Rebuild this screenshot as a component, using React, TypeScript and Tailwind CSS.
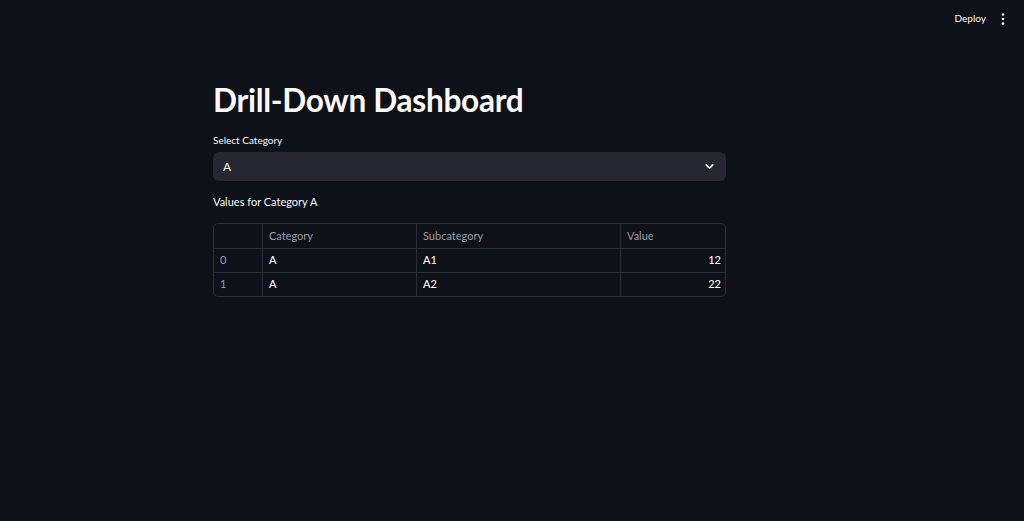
import { ChevronDown } from "lucide-react";

const rows = [
  { idx: 0, category: "A", sub: "A1", value: 12 },
  { idx: 1, category: "A", sub: "A2", value: 22 },
];

export default function App() {
  return (
    <div
      className="min-h-[521px] w-full bg-[#0e1117] text-[#fafafa]"
      style={{ fontFamily: "Lato, 'Liberation Sans', sans-serif" }}
    >
      <header className="flex h-[37px] items-center justify-end pr-[19px]">
        <button className="text-[10px] text-[#fafafa] mr-[15px]">Deploy</button>
        <svg width="4" height="12" viewBox="0 0 4 12" className="fill-[#fafafa]">
          <circle cx="2" cy="1.5" r="1.3" />
          <circle cx="2" cy="6" r="1.3" />
          <circle cx="2" cy="10.5" r="1.3" />
        </svg>
      </header>

      <main className="pl-[213px] pt-[44px]">
        <div className="w-[513px]">
          <h1 className="text-[31.6px] font-bold leading-[38px] tracking-[-0.3px]">Drill-Down Dashboard</h1>

          <label className="mt-[14px] block text-[10px] leading-[14px]">Select Category</label>
          <div className="mt-[5px] flex h-[29px] items-center justify-between rounded-[6px] bg-[#262730] pl-[10px] pr-[10px]">
            <span className="text-[12px]">A</span>
            <ChevronDown className="h-[13px] w-[13px]" strokeWidth={3} />
          </div>

          <p className="mt-[13px] text-[11px] leading-[16px]">Values for Category A</p>

          <div className="mt-[13px] overflow-hidden rounded-[5px] border border-[#2a2d35] text-[11px]">
            <div className="grid grid-cols-[49px_154px_204px_1fr] h-[24px] text-[#9b9ca3]">
              <div className="border-r border-[#2a2d35]" />
              <div className="flex items-center border-r border-[#2a2d35] px-[6px]">Category</div>
              <div className="flex items-center border-r border-[#2a2d35] px-[6px]">Subcategory</div>
              <div className="flex items-center px-[6px]">Value</div>
            </div>
            {rows.map((r) => (
              <div key={r.idx} className="grid grid-cols-[49px_154px_204px_1fr] h-[24px] border-t border-[#2a2d35]">
                <div className="flex items-center border-r border-[#2a2d35] px-[6px] text-[#9b9ca3]">{r.idx}</div>
                <div className="flex items-center border-r border-[#2a2d35] px-[6px] font-medium">{r.category}</div>
                <div className="flex items-center border-r border-[#2a2d35] px-[6px] font-medium">{r.sub}</div>
                <div className="flex items-center justify-end px-[4px] font-medium">{r.value}</div>
              </div>
            ))}
          </div>
        </div>
      </main>
    </div>
  );
}
